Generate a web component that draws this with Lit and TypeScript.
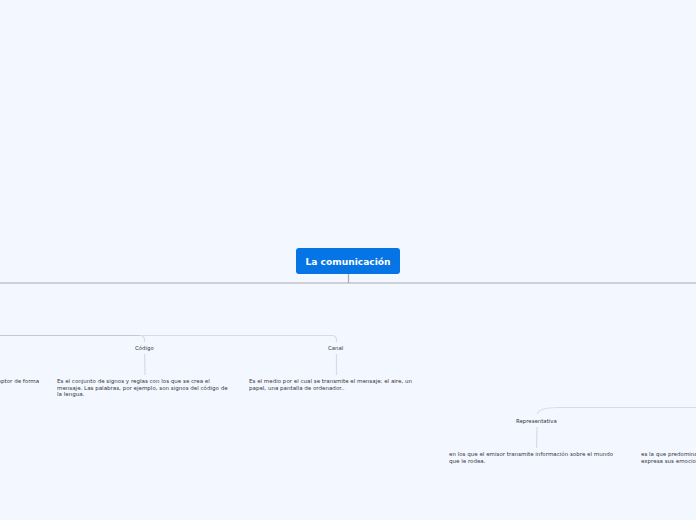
import { LitElement, html, css, svg } from "lit";
import { customElement } from "lit/decorators.js";

type N = { t: string; x: number; y: number };
const labels: N[] = [
  { t: "Código", x: 135, y: 345 },
  { t: "Canal", x: 328, y: 345 },
  { t: "Representativa", x: 516, y: 418 },
];
const notes: N[] = [
  { t: "receptor de forma", x: -11, y: 378 },
  { t: "Es el conjunto de signos y reglas con los que se crea el\nmensaje. Las palabras, por ejemplo, son signos del código de\nla lengua.", x: 57, y: 378 },
  { t: "Es el medio por el cual se transmite el mensaje: el aire, un\npapel, una pantalla de ordenador..", x: 248.5, y: 378 },
  { t: "en los que el emisor transmite información sobre el mundo\nque le rodea.", x: 449, y: 451 },
  { t: "es la que predomina cuando el emisor\nexpresa sus emociones", x: 641, y: 451 },
];

@customElement("app-root")
export class AppRoot extends LitElement {
  static styles = css`
    :host { display: block; width: 696px; height: 520px; overflow: hidden; }
    .canvas { position: relative; width: 696px; height: 520px; background: #f3f7ff; overflow: hidden;
      font-family: "DejaVu Sans", sans-serif; }
    svg { position: absolute; inset: 0; }
    .root { position: absolute; left: 296px; top: 248px; width: 104px; height: 26px; box-sizing: border-box;
      background: #0574e4; border-radius: 3px; color: #fff;
      display: flex; align-items: center; justify-content: center; padding-top: 1px; }
    .root span { font-size: 18.2px; font-weight: 700; white-space: nowrap; transform: scale(0.5); }
    .label { position: absolute; font-size: 10.8px; line-height: 14px; color: #36363b; white-space: nowrap;
      transform: scale(0.5); transform-origin: 0 0; }
    .note { position: absolute; font-size: 11.08px; line-height: 13.2px; color: #36363b; white-space: pre;
      transform: scale(0.5); transform-origin: 0 0; }
  `;
  render() {
    return html`<div class="canvas">
      <svg width="696" height="520" fill="none">
        ${svg`<path d="M348.5 274V283" stroke="#a9a9ae" stroke-width="1.2"/>
        <path d="M0 283H696" stroke="#aaaab0" stroke-width="1.2"/>
        <path d="M0 335.5H140" stroke="#c6c8d0" stroke-width="1.2"/>
        <path d="M140 335.5H332Q336.5 335.5 336.5 340V342" stroke="#d8dbe4" stroke-width="1.2"/>
        <path d="M140 335.5Q144.5 335.5 144.5 340V342" stroke="#d8dbe4" stroke-width="1.2"/>
        <path d="M144.5 354Q145 365 145 375" stroke="#d8dbe4" stroke-width="1.2"/>
        <path d="M336.5 354V375" stroke="#d8dbe4" stroke-width="1.2"/>
        <path d="M696 407.5H560Q538 407.5 537.5 414" stroke="#d8dbe4" stroke-width="1.2"/>
        <path d="M537 427Q537 435 536.5 448" stroke="#d8dbe4" stroke-width="1.2"/>`}
      </svg>
      <div class="root"><span>La comunicación</span></div>
      ${labels.map((n) => html`<div class="label" style="left:${n.x}px;top:${n.y}px">${n.t}</div>`)}
      ${notes.map((n) => html`<div class="note" style="left:${n.x}px;top:${n.y}px">${n.t}</div>`)}
    </div>`;
  }
}
